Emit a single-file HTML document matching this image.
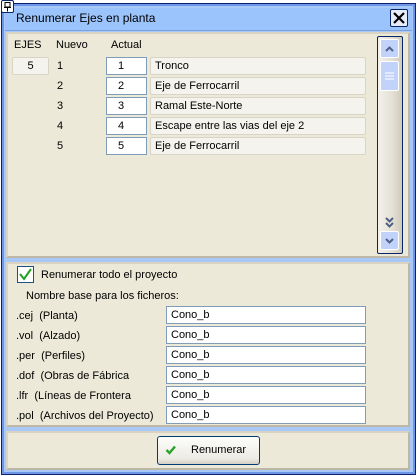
<!DOCTYPE html>
<html><head><meta charset="utf-8"><style>
*{box-sizing:border-box;margin:0;padding:0}
body{width:417px;height:476px;background:#fff;font-family:"Liberation Sans",Arial,sans-serif;font-size:11px;color:#000;position:relative;overflow:hidden}
.abs{position:absolute}
.frame{left:1px;top:3px;width:415px;height:472px;border:1px solid #0a246a;background:#6f95e8}
.inner{left:4px;top:6px;width:409px;height:466px;background:#a8c8f8}
.title{left:5px;top:8px;width:407px;height:23px;background:#9cc4fc;border-bottom:1px solid #7aa0e0}
.panel{background:#ece9d8;border:2px solid #d8d3c2;border-right-color:#bdb8a6;border-bottom-color:#bdb8a6}
.t{position:absolute;white-space:pre;line-height:13px}
.in{position:absolute;background:#fff;border:1px solid #7f9db9;height:18px;line-height:16px;padding-left:4px;white-space:nowrap}
.nm{position:absolute;background:#f4f3ee;border:1px solid #d9d5c6;border-radius:2px;height:18px;line-height:16px;padding-left:4px;left:150px;width:216px}
</style></head><body>
<div class="abs frame"></div>
<div class="abs inner"></div>
<div class="abs title"></div>
<div class="abs" style="left:1px;top:0;width:13px;height:13px;background:#fff;border:1px solid #0a246a;border-radius:2px">
<svg width="11" height="11" style="position:absolute;left:0;top:0"><path d="M3 1.5H8V6H3Z" fill="none" stroke="#000"/><path d="M2 6.5H9M5.5 7V10.5" stroke="#000"/></svg></div>
<div class="t" style="left:16px;top:12px;font-size:12px">Renumerar Ejes en planta</div>
<div class="abs" style="left:390px;top:9px;width:18px;height:18px;background:#e6ecf8;border:1px solid #0a246a;border-radius:2px">
<svg width="16" height="16" style="position:absolute;left:0;top:0"><path d="M3 3L13 13M13 3L3 13" stroke="#000" stroke-width="2.2"/></svg></div>

<div class="abs panel" style="left:6px;top:32px;width:404px;height:226px"></div>
<div class="t" style="left:14px;top:39px">EJES</div>
<div class="t" style="left:56px;top:39px">Nuevo</div>
<div class="t" style="left:111px;top:39px">Actual</div>
<div class="abs" style="left:12px;top:57px;width:37px;height:18px;background:#f4f3ee;border:1px solid #d9d5c6;border-radius:2px;text-align:center;line-height:16px">5</div>

<div class="t" style="left:57px;top:60px">1</div><div class="in" style="left:106px;top:57px;width:41px;padding-left:11px">1</div><div class="nm" style="top:57px">Tronco</div>
<div class="t" style="left:57px;top:80px">2</div><div class="in" style="left:106px;top:77px;width:41px;padding-left:11px">2</div><div class="nm" style="top:77px">Eje de Ferrocarril</div>
<div class="t" style="left:57px;top:100px">3</div><div class="in" style="left:106px;top:97px;width:41px;padding-left:11px">3</div><div class="nm" style="top:97px">Ramal Este-Norte</div>
<div class="t" style="left:57px;top:120px">4</div><div class="in" style="left:106px;top:117px;width:41px;padding-left:11px">4</div><div class="nm" style="top:117px">Escape entre las vias del eje 2</div>
<div class="t" style="left:57px;top:140px">5</div><div class="in" style="left:106px;top:137px;width:41px;padding-left:11px">5</div><div class="nm" style="top:137px">Eje de Ferrocarril</div>

<div class="abs" style="left:377px;top:36px;width:26px;height:218px;border:1px solid #0a246a;border-radius:2px;background:linear-gradient(90deg,#f3f1ea,#e4e0d4 60%,#cfcabb)"></div>
<div class="abs" style="left:380px;top:39px;width:19px;height:19px;background:#c1d3fb;border:1px solid #fff;border-radius:2px"><svg width="17" height="17"><path d="M5 11L8.5 7.5L12 11" stroke="#4d6185" stroke-width="2" fill="none"/></svg></div>
<div class="abs" style="left:380px;top:61px;width:19px;height:30px;background:#c1d3fb;border:1px solid #fff;border-radius:2px"><svg width="17" height="28"><path d="M4 11H13M4 14H13M4 17H13" stroke="#fff" stroke-width="1"/></svg></div>
<svg class="abs" style="left:380px;top:216px" width="19" height="14"><path d="M6 2L9.5 5.5L13 2M6 7L9.5 10.5L13 7" stroke="#4d6185" stroke-width="2" fill="none"/></svg>
<div class="abs" style="left:380px;top:231px;width:19px;height:19px;background:#c1d3fb;border:1px solid #fff;border-radius:2px"><svg width="17" height="17"><path d="M5 7L8.5 10.5L12 7" stroke="#4d6185" stroke-width="2" fill="none"/></svg></div>

<div class="abs panel" style="left:6px;top:262px;width:404px;height:165px"></div>
<div class="abs" style="left:17px;top:266px;width:17px;height:17px;background:#fff;border:1px solid #1c5180"><svg width="15" height="15"><path d="M2 7L6 12L13 2" stroke="#21a121" stroke-width="2" fill="none"/></svg></div>
<div class="t" style="left:41px;top:269px">Renumerar todo el proyecto</div>
<div class="t" style="left:26px;top:290px">Nombre base para los ficheros:</div>
<div class="t" style="left:16px;top:310px">.cej  (Planta)</div><div class="in" style="left:166px;top:306px;width:200px">Cono_b</div>
<div class="t" style="left:16px;top:330px">.vol  (Alzado)</div><div class="in" style="left:166px;top:326px;width:200px">Cono_b</div>
<div class="t" style="left:16px;top:350px">.per  (Perfiles)</div><div class="in" style="left:166px;top:346px;width:200px">Cono_b</div>
<div class="t" style="left:16px;top:370px">.dof  (Obras de Fábrica</div><div class="in" style="left:166px;top:366px;width:200px">Cono_b</div>
<div class="t" style="left:16px;top:390px">.lfr  (Líneas de Frontera</div><div class="in" style="left:166px;top:386px;width:200px">Cono_b</div>
<div class="t" style="left:16px;top:410px">.pol  (Archivos del Proyecto)</div><div class="in" style="left:166px;top:406px;width:200px">Cono_b</div>

<div class="abs panel" style="left:6px;top:431px;width:404px;height:39px"></div>
<div class="abs" style="left:157px;top:436px;width:103px;height:29px;border:1px solid #003c74;border-radius:3px;background:linear-gradient(#fdfdfb,#ecebe5 80%,#d6d0c5)"></div>
<svg class="abs" style="left:165px;top:444px" width="12" height="12"><path d="M1.5 6L4.5 9L10 2.5" stroke="#2aa12a" stroke-width="2.4" fill="none"/></svg>
<div class="t" style="left:191px;top:444px">Renumerar</div>
</body></html>
